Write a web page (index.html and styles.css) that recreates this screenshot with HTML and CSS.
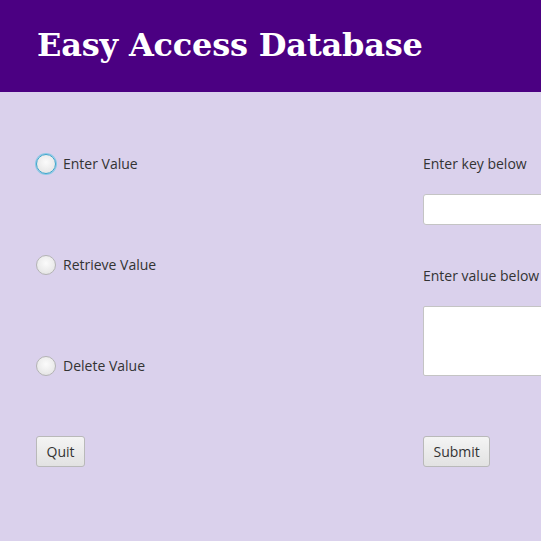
FILE: index.html
```html
<!DOCTYPE html>
<html>
<head>
<meta charset="utf-8">
<link rel="stylesheet" href="styles.css">
</head>
<body>
<header class="header"><h1 class="title">Easy Access Database</h1></header>
<main class="main">
  <div class="col left">
    <label class="radio-row r1"><span class="radio focused"></span><span class="txt">Enter Value</span></label>
    <label class="radio-row r2"><span class="radio"></span><span class="txt">Retrieve Value</span></label>
    <label class="radio-row r3"><span class="radio"></span><span class="txt">Delete Value</span></label>
    <button class="btn quit">Quit</button>
  </div>
  <div class="col right">
    <div class="lbl l1">Enter key below</div>
    <div class="field"></div>
    <div class="lbl l2">Enter value below</div>
    <div class="area"></div>
    <button class="btn submit">Submit</button>
  </div>
</main>
</body>
</html>
```
FILE: styles.css
```css
html, body { margin: 0; padding: 0; }
body {
  width: 541px; height: 541px; overflow: hidden;
  background: #dad1ec;
  font-family: "Open Sans", "Noto Sans", sans-serif;
  font-size: 14px; color: #333;
}
.header {
  height: 92px; background: #4b0082;
  display: flex; align-items: center;
  padding-left: 37px;
}
.title {
  margin: 0; margin-top: -2px;
  font-family: "DejaVu Serif", serif;
  font-weight: bold; font-size: 32px; color: #fff;
  letter-spacing: -0.2px;
}
.main {
  display: flex; padding-left: 36px; padding-top: 62px;
}
.col { display: flex; flex-direction: column; align-items: flex-start; }
.left { width: 387px; flex: none; }
.right { flex: 1; min-width: 0; }
.radio-row { display: flex; align-items: center; height: 20px; gap: 7px; }
.r2, .r3 { margin-top: 81px; }
.radio {
  width: 20px; height: 20px; border-radius: 50%;
  box-sizing: border-box;
  border: 1px solid #b4b4b4;
  background: radial-gradient(circle at 50% 40%, #fbfbfb 0%, #ececec 55%, #dedede 100%);
}
.radio.focused {
  border: 1.5px solid #3ba6cc;
  box-shadow: 0 0 0 1px #8dc9e6;
}
.txt { line-height: 20px; }
.btn {
  margin-top: 60px; height: 31px;
  font-family: inherit; font-size: 14px; color: #333;
  border: 1px solid #b9b9b9; border-radius: 3px;
  background: linear-gradient(#f4f4f4, #e2e2e2);
  padding: 0 9.5px;
}
.lbl { height: 20px; line-height: 20px; }
.field {
  margin-top: 20px; height: 31px; width: 200px;
  box-sizing: border-box; background: #fff;
  border: 1px solid #c4c4c4; border-radius: 3px;
}
.l2 { margin-top: 41px; }
.area {
  margin-top: 20px; height: 70px; width: 200px;
  box-sizing: border-box; background: #fff;
  border: 1px solid #c4c4c4; border-radius: 2px;
}
```
